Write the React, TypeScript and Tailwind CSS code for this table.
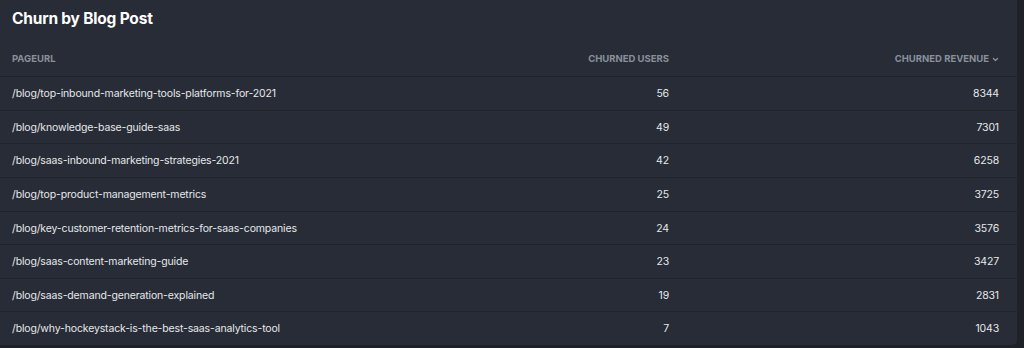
import React from "react";

const rows: [string, number, number][] = [
  ["/blog/top-inbound-marketing-tools-platforms-for-2021", 56, 8344],
  ["/blog/knowledge-base-guide-saas", 49, 7301],
  ["/blog/saas-inbound-marketing-strategies-2021", 42, 6258],
  ["/blog/top-product-management-metrics", 25, 3725],
  ["/blog/key-customer-retention-metrics-for-saas-companies", 24, 3576],
  ["/blog/saas-content-marketing-guide", 23, 3427],
  ["/blog/saas-demand-generation-explained", 19, 2831],
  ["/blog/why-hockeystack-is-the-best-saas-analytics-tool", 7, 1043],
];

export default function App() {
  return (
    <div
      className="w-[1024px] h-[348px] bg-[#1e2128] flex overflow-hidden"
      style={{ fontFamily: "Inter, 'Noto Sans', sans-serif" }}
    >
      <div className="w-[1017px] h-[345px] bg-[#272c36] rounded-br-[5px] flex flex-col overflow-hidden">
        <div className="h-[38px] px-3 flex items-center">
          <h1 className="text-[15.5px] font-bold text-white tracking-[-0.2px]">Churn by Blog Post</h1>
        </div>
        <div className="h-[40px] pt-[5px] flex items-center px-3 pr-[18px] text-[9.5px] font-bold text-[#8a909b] uppercase">
          <div className="flex-1">PageURL</div>
          <div className="w-[200px] text-right">Churned Users</div>
          <div className="w-[330px] flex justify-end items-center gap-[3px]">
            <span>Churned Revenue</span>
            <svg width="7" height="7" viewBox="0 0 10 10" fill="none" stroke="#8a909b" strokeWidth="1.8" strokeLinecap="round" strokeLinejoin="round">
              <path d="M2 3.5 L5 6.5 L8 3.5" />
            </svg>
          </div>
        </div>
        {rows.map(([url, users, rev]) => (
          <div
            key={url}
            className="h-[33.6px] shrink-0 flex items-center pt-[1px] px-3 pr-[18px] border-t border-[#20242b] text-[10.5px] tracking-[-0.15px] text-[#e6e8eb]"
          >
            <div className="flex-1">{url}</div>
            <div className="w-[200px] text-right">{users}</div>
            <div className="w-[330px] text-right">{rev}</div>
          </div>
        ))}
      </div>
    </div>
  );
}
